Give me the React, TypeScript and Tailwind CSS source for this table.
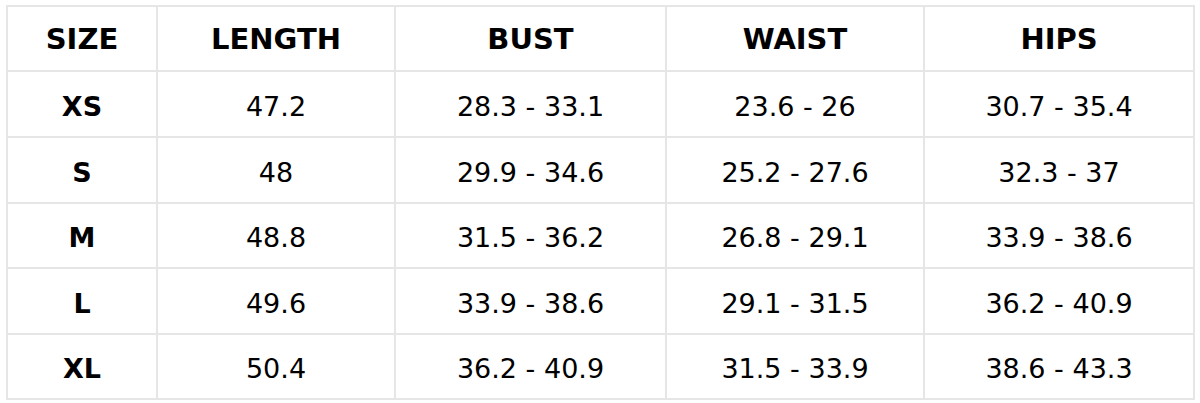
import React from 'react';

type Row = { size: string; length: string; bust: string; waist: string; hips: string };

const rows: Row[] = [
  { size: 'XS', length: '47.2', bust: '28.3 - 33.1', waist: '23.6 - 26', hips: '30.7 - 35.4' },
  { size: 'S', length: '48', bust: '29.9 - 34.6', waist: '25.2 - 27.6', hips: '32.3 - 37' },
  { size: 'M', length: '48.8', bust: '31.5 - 36.2', waist: '26.8 - 29.1', hips: '33.9 - 38.6' },
  { size: 'L', length: '49.6', bust: '33.9 - 38.6', waist: '29.1 - 31.5', hips: '36.2 - 40.9' },
  { size: 'XL', length: '50.4', bust: '36.2 - 40.9', waist: '31.5 - 33.9', hips: '38.6 - 43.3' },
];

const headers = ['SIZE', 'LENGTH', 'BUST', 'WAIST', 'HIPS'];

const cell = 'flex items-center justify-center border-r-2 border-b-2 border-[#e6e6e6]';

const App: React.FC = () => {
  return (
    <div className="w-[1200px] h-[403px] bg-white pl-[6px] pt-[5px] font-['DejaVu_Sans',sans-serif] text-black">
      <div className="grid grid-cols-[150px_238px_271px_258px_270px] grid-rows-[65px_66px_66px_65px_66px_65px] w-fit border-l-2 border-t-2 border-[#e6e6e6]">
        {headers.map(h => (
          <div key={h} className={`${cell} pt-[3px] text-[29px] font-bold`}>{h}</div>
        ))}
        {rows.map(r => (
          <React.Fragment key={r.size}>
            <div className={`${cell} pt-[6px] text-[27px] font-bold`}>{r.size}</div>
            <div className={`${cell} pt-[6px] text-[27px]`}>{r.length}</div>
            <div className={`${cell} pt-[6px] text-[27px]`}>{r.bust}</div>
            <div className={`${cell} pt-[6px] text-[27px]`}>{r.waist}</div>
            <div className={`${cell} pt-[6px] text-[27px]`}>{r.hips}</div>
          </React.Fragment>
        ))}
      </div>
    </div>
  );
};

export default App;
